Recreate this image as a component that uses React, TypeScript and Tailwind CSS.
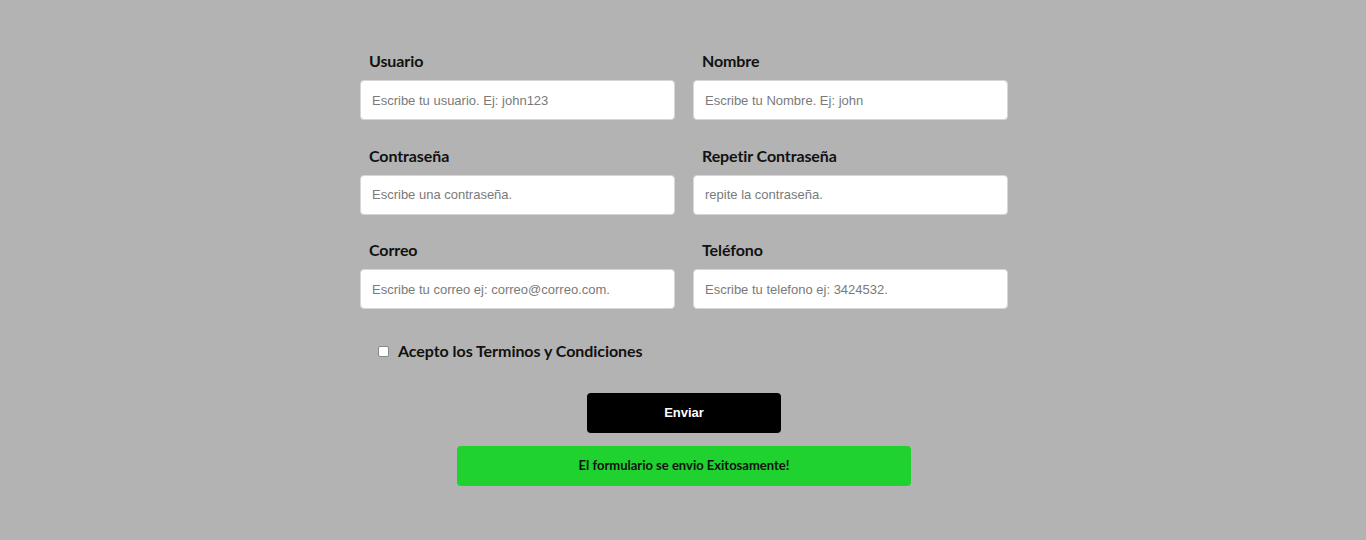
import React from "react";

const fields = [
  ["Usuario", "Escribe tu usuario. Ej: john123"],
  ["Nombre", "Escribe tu Nombre. Ej: john"],
  ["Contraseña", "Escribe una contraseña."],
  ["Repetir Contraseña", "repite la contraseña."],
  ["Correo", "Escribe tu correo ej: correo@correo.com."],
  ["Teléfono", "Escribe tu telefono ej: 3424532."],
];

export default function App() {
  return (
    <div className="min-h-[540px] w-full bg-[#b3b3b3] font-['Lato',sans-serif]">
      <div className="mx-auto w-[650px] pl-[2px] pt-[49px]">
        <div className="grid grid-cols-2 gap-x-[18px] gap-y-[23.5px]">
          {fields.map(([label, ph]) => (
            <div key={label} className="flex flex-col">
              <label className="pl-[9px] text-[16px] leading-[24px] font-bold text-[#111] tracking-[-0.1px]">{label}</label>
              <input
                type="text"
                placeholder={ph}
                className="mt-[7px] h-[40px] w-full rounded-[4px] border border-[#d6d6d6] bg-white px-[11px] font-['Liberation_Sans',sans-serif] text-[13px] text-[#333] placeholder:text-[#7a7a7a] outline-none"
              />
            </div>
          ))}
        </div>
        <div className="mt-[30px] flex items-center pl-[18px]">
          <input type="checkbox" className="h-[11px] w-[11px] appearance-none rounded-[2px] border border-[#888] bg-white" />
          <span className="ml-[9px] text-[16px] leading-[24px] font-bold text-[#111] tracking-[-0.05px]">Acepto los Terminos y Condiciones</span>
        </div>
        <div className="mt-[30px] flex justify-center">
          <button className="h-[40px] w-[194px] rounded-[4px] bg-black font-['Liberation_Sans',sans-serif] text-[13px] font-bold text-white">
            Enviar
          </button>
        </div>
        <div className="mx-auto mt-[13px] flex h-[40px] w-[454px] items-center justify-center rounded-[4px] bg-[#1fd22f] text-[13px] font-bold text-[#111]">
          El formulario se envio Exitosamente!
        </div>
      </div>
    </div>
  );
}
